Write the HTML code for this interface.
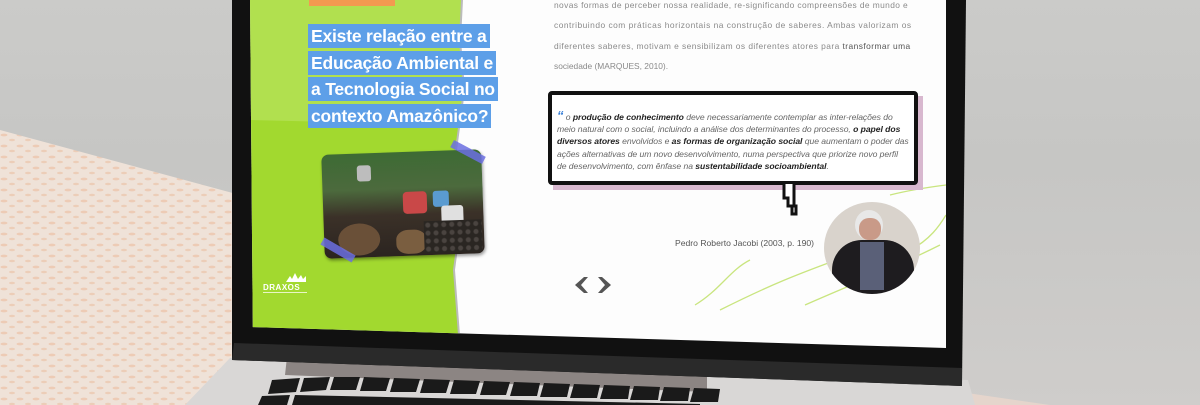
<!DOCTYPE html>
<html><head><meta charset="utf-8"><style>
*{margin:0;padding:0;box-sizing:border-box}
body{width:1200px;height:405px;overflow:hidden;position:relative;background:#cfcfcf;font-family:"Liberation Sans",sans-serif}
.abs{position:absolute}
.hl{background:#5d9fe8;color:#fff;font-weight:bold;font-size:17.5px;padding:1px 3px;line-height:22px;display:inline-block;letter-spacing:-0.2px}
.p{color:#8a8a8a;font-size:8.4px;letter-spacing:.4px;white-space:nowrap}
.q{font-style:italic;font-size:8.6px;color:#666;white-space:nowrap;line-height:12.2px;letter-spacing:-0.05px}
.q b{color:#222}
</style></head><body>
<div class="abs" style="left:0;top:0;width:1200px;height:405px;background:linear-gradient(180deg,#cbcbc9 0%,#c6c6c4 40%,#cfcdcb 100%)"></div>
<svg class="abs" style="left:0;top:0" width="1200" height="405">
<defs><pattern id="sp" width="16" height="11" patternUnits="userSpaceOnUse"><rect width="16" height="11" fill="#efe2d8"/><ellipse cx="4" cy="3" rx="3.5" ry="1.4" fill="#ebbd9f" opacity=".6"/><ellipse cx="12" cy="8" rx="3" ry="1.2" fill="#e9b798" opacity=".5"/></pattern></defs>
<polygon points="0,130 240,195 240,405 0,405" fill="url(#sp)"/>
<polygon points="960,392 1050,405 960,405" fill="#e5d5cc"/>
<polygon points="230,358 968,380 975,405 185,405" fill="#d9d7d6"/>
<polygon points="287,357 707,368 707,392 285,375" fill="#8c8583"/>
<g fill="#1a1a1a">
<polygon points="272,380 300,378 296,392 268,394"/><polygon points="304,378 330,377 326,390 300,392"/>
<polygon points="334,377 360,377 356,390 330,390"/><polygon points="364,377 390,378 386,391 360,391"/>
<polygon points="394,378 420,379 416,392 390,392"/><polygon points="424,379 450,380 446,393 420,393"/>
<polygon points="454,380 480,381 476,394 450,394"/><polygon points="484,381 510,382 506,395 480,395"/>
<polygon points="514,382 540,383 537,396 510,396"/><polygon points="544,383 570,384 567,397 540,397"/>
<polygon points="574,384 600,385 597,398 570,398"/><polygon points="604,385 630,386 628,399 600,399"/>
<polygon points="634,386 660,387 658,400 630,400"/><polygon points="664,387 690,388 688,401 660,401"/>
<polygon points="694,388 720,389 718,402 690,402"/><polygon points="262,396 290,395 287,405 258,405"/>
<polygon points="295,395 700,404 700,405 292,405"/>
</g>
<polygon points="232,0 966,0 962,386 232,360" fill="#111"/>
<polygon points="234,343 962,368 962,386 232,360" fill="#2a2a2a"/>
</svg>
<div class="abs" style="left:250px;top:0;width:696px;height:348px;clip-path:polygon(0 0,100% 0,100% 100%,0.4% 94%);background:#fdfdfd;overflow:hidden">
 <svg class="abs" style="left:0;top:0" width="696" height="348">
  <polygon points="0,0 212,0 210,40 214,90 206,150 212,210 204,270 210,348 0,348" fill="#a2d92f"/>
  <polygon points="0,0 212,0 210,40 214,90 212,125 0,120" fill="#bde66a" opacity=".55"/>
  <path d="M212,0 L210,40 214,90 206,150 212,210 204,270 210,348" stroke="#bbb" stroke-width="2" fill="none"/>
  <path d="M445,305 C470,290 480,270 500,260 M470,310 C520,285 545,275 600,255 M555,305 C600,285 640,270 690,245 M640,195 C660,190 680,187 696,185 M660,250 C680,240 690,225 696,215" stroke="#c9e57f" stroke-width="1.3" fill="none"/>
 </svg>
 <div class="abs" style="left:59px;top:-10px;background:#f29a50;width:86px;height:16px"></div>
 <div class="abs" style="left:58px;top:24px;line-height:25.7px">
  <span class="hl">Existe relação entre a</span><br><span class="hl">Educação Ambiental e</span><br><span class="hl">a Tecnologia Social no</span><br><span class="hl">contexto Amazônico?</span>
 </div>
 <div class="abs" style="left:73px;top:152px;width:160px;height:104px;border-radius:7px;transform:rotate(-2deg);overflow:hidden;background:linear-gradient(180deg,#3d6b34 0%,#4c6a3d 35%,#3b3128 60%,#2b2420 100%);box-shadow:1px 2px 3px rgba(0,0,0,.4)">
  <div class="abs" style="left:80px;top:40px;width:24px;height:22px;background:#c94848;border-radius:4px"></div>
  <div class="abs" style="left:14px;top:70px;width:42px;height:32px;background:#6a5038;border-radius:50%"></div>
  <div class="abs" style="left:72px;top:78px;width:30px;height:24px;background:#7a5e40;border-radius:40%"></div>
  <div class="abs" style="left:35px;top:12px;width:14px;height:16px;background:#bdbdbd;border-radius:3px"></div>
  <div class="abs" style="left:110px;top:40px;width:16px;height:16px;background:#5a9bd0;border-radius:3px"></div>
  <div class="abs" style="left:118px;top:55px;width:22px;height:22px;background:#e0e0e0;border-radius:3px"></div>
  <div class="abs" style="left:100px;top:70px;width:58px;height:32px;background:radial-gradient(circle,#4a4440 2px,#2a2622 3px);background-size:8px 8px"></div>
 </div>
 <div class="abs" style="left:200px;top:148px;width:36px;height:8px;background:#6b6fe0;opacity:.85;transform:rotate(28deg)"></div>
 <div class="abs" style="left:70px;top:246px;width:36px;height:8px;background:#6b6fe0;opacity:.85;transform:rotate(30deg)"></div>
 <svg class="abs" style="left:34px;top:272px" width="24" height="10"><path d="M2,10 L6,4 L8,7 L11,1 L14,7 L17,3 L19,7 L22,4 L22,10Z" fill="#fff"/></svg>
 <div class="abs" style="left:13px;top:283px;color:#fff;font-size:8px;font-weight:bold;letter-spacing:.5px">DRAXOS</div>
 <div class="abs" style="left:13px;top:292px;width:44px;height:1px;background:#e9f6c6"></div>
 <div class="abs p" style="left:304px;top:0px">novas formas de perceber nossa realidade, re-significando compreensões de mundo e</div>
 <div class="abs p" style="left:304px;top:20px;letter-spacing:.5px">contribuindo com práticas horizontais na construção de saberes. Ambas valorizam os</div>
 <div class="abs p" style="left:304px;top:41px;letter-spacing:.45px">diferentes saberes, motivam e sensibilizam os diferentes atores para <span style="color:#555">transformar uma</span></div>
 <div class="abs p" style="left:304px;top:61px;letter-spacing:0">sociedade (MARQUES, 2010).</div>
 <div class="abs" style="left:303px;top:96px;width:370px;height:94px;background:#d8b8cf"></div>
 <div class="abs" style="left:298px;top:91px;width:370px;height:94px;background:#fff;border:4px solid #111;border-radius:4px"></div>
 <svg class="abs" style="left:530px;top:184px" width="24" height="36"><path d="M4,0 V14 H8 V22 H12 V30 H16 V22 H14 V0" fill="#fff" stroke="#111" stroke-width="3"/></svg>
 <div class="abs q" style="left:307px;top:110px"><b style="color:#2f7ad6;font-size:13px;font-style:italic">“</b> o <b>produção de conhecimento</b> deve necessariamente contemplar as inter-relações do<br>meio natural com o social, incluindo a análise dos determinantes do processo, <b>o papel dos</b><br><b>diversos atores</b> envolvidos e <b>as formas de organização social</b> que aumentam o poder das<br>ações alternativas de um novo desenvolvimento, numa perspectiva que priorize novo perfil<br>de desenvolvimento, com ênfase na <b>sustentabilidade socioambiental</b>.</div>
 <div class="abs" style="left:425px;top:238px;font-size:8.6px;color:#555;white-space:nowrap">Pedro Roberto Jacobi (2003, p. 190)</div>
 <div class="abs" style="left:574px;top:202px;width:96px;height:92px;border-radius:50%;background:#d9d3cc;overflow:hidden">
  <div class="abs" style="left:31px;top:8px;width:28px;height:30px;border-radius:50%;background:#e8e8e8"></div>
  <div class="abs" style="left:35px;top:16px;width:22px;height:22px;border-radius:45%;background:#c99a88"></div>
  <div class="abs" style="left:8px;top:38px;width:82px;height:60px;border-radius:30px 30px 0 0;background:#1e1c1f"></div>
  <div class="abs" style="left:36px;top:40px;width:24px;height:48px;background:#5a6078"></div>
 </div>
 <svg class="abs" style="left:322px;top:275px" width="46" height="20"><path d="M12,2 L3,10 L12,18 L16,18 L9,10 L16,2Z M30,2 L39,10 L30,18 L26,18 L33,10 L26,2Z" fill="#555"/></svg>
</div>
</body></html>
